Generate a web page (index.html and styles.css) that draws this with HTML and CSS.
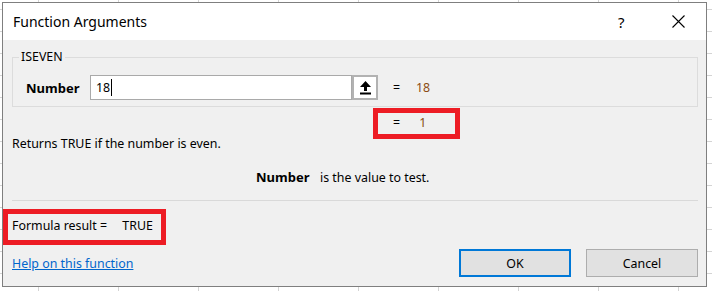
FILE: index.html
```html
<!DOCTYPE html>
<html lang="en">
<head>
  <meta charset="UTF-8" />
  <title>Function Arguments</title>
  <link rel="stylesheet" href="styles.css">
</head>
<body>
  <div class="dialog">
    <div class="titlebar">
      <span class="title">Function Arguments</span>
      <span class="help-btn">?</span>
      <span class="close-btn">
        <svg width="13" height="13" viewBox="0 0 13 13"><path d="M0.5 0.5 L12.5 12.5 M12.5 0.5 L0.5 12.5" stroke="#000" stroke-width="1.1" fill="none"/></svg>
      </span>
    </div>

    <div class="content">
      <fieldset class="args">
        <legend>ISEVEN</legend>
        <div class="arg-row">
          <span class="arg-name">Number</span>
          <div class="arg-input">18<span class="caret"></span></div>
          <span class="ref-btn">
            <svg width="11" height="14" viewBox="0 0 11 14"><path d="M5.5 0 L11 6 H7 V10 H4 V6 H0 Z" fill="#000"/><rect x="0" y="11.5" width="11" height="2" fill="#000"/></svg>
          </span>
          <span class="eq">=</span>
          <span class="val">18</span>
        </div>
      </fieldset>

      <div class="result-row marked mark-result">
        <span class="eq">=</span>
        <span class="val">1</span>
      </div>

      <p class="desc">Returns TRUE if the number is even.</p>
      <p class="arg-desc"><b>Number</b><span>is the value to test.</span></p>

      <div class="sep"></div>

      <div class="formula marked mark-formula">Formula result = <span class="formula-val">TRUE</span></div>

      <div class="footer">
        <a class="help-link" href="#">Help on this function</a>
        <div class="buttons">
          <button class="btn btn-ok">OK</button>
          <button class="btn">Cancel</button>
        </div>
      </div>
    </div>
  </div>
</body>
</html>
```

FILE: styles.css
```css
body {
  margin: 0;
  width: 712px;
  height: 291px;
  overflow: hidden;
  font-family: 'Noto Sans', 'Open Sans', sans-serif;
  font-size: 12.4px;
  color: #000;
  background-color: #fff;
  background-image:
    linear-gradient(to right, #d4d4d4 1px, transparent 1px),
    linear-gradient(to bottom, #d4d4d4 1px, transparent 1px);
  background-size: 80px 22px;
  background-position: 38px 9px;
}
.dialog {
  margin: 2px 0 0 2px;
  width: 703px;
  height: 283px;
  border: 1px solid #7f7f7f;
  background-color: #f0f0f0;
  display: flex;
  flex-direction: column;
}
.titlebar {
  height: 37px;
  background-color: #fff;
  display: flex;
  align-items: center;
  padding-left: 10px;
}
.title {
  font-size: 14px;
  flex: 1;
  padding-bottom: 1px;
}
.help-btn {
  font-size: 15px;
  width: 12px;
  margin-right: 42px;
}
.close-btn {
  display: flex;
  margin-right: 21px;
}
.content {
  flex: 1;
  padding: 0 8px 0 9px;
}
.args {
  margin: 9px 0 0 0;
  padding: 0;
  border: 1px solid #dcdcdc;
}
.args legend {
  margin-left: 6px;
  padding: 0 2px;
  line-height: 16px;
}
.arg-row {
  display: flex;
  align-items: center;
  padding: 10px 0 6px 13px;
}
.arg-name {
  width: 64px;
  font-weight: bold;
  font-size: 13px;
}
.arg-input {
  width: 255px;
  height: 23px;
  border: 1px solid #a9a9a9;
  background-color: #fff;
  padding-left: 5px;
  line-height: 23px;
  display: flex;
  align-items: center;
}
.caret {
  display: inline-block;
  width: 1px;
  height: 17px;
  background-color: #000;
  margin-left: 1px;
}
.ref-btn {
  width: 22px;
  height: 21px;
  border: 2px solid #b2b2b2;
  background-color: #fff;
  display: flex;
  align-items: center;
  justify-content: center;
}
.eq {
  display: inline-block;
  width: 23px;
  margin-left: 15px;
}
.val {
  color: #8a4c12;
}
.marked {
  position: relative;
}
.marked::after {
  content: "";
  position: absolute;
  border: 5px solid #ed1c24;
  box-sizing: border-box;
}
.result-row {
  margin-top: 8px;
  line-height: 16px;
  padding-left: 381px;
}
.result-row .eq {
  margin-left: 0;
}
.mark-result::after {
  left: 361px;
  top: -7px;
  width: 87px;
  height: 31px;
}
.desc {
  margin: 5px 0 0 0;
  line-height: 16px;
}
.arg-desc {
  margin: 17px 0 0 0;
  line-height: 16px;
  padding-left: 244px;
}
.arg-desc b {
  display: inline-block;
  width: 64px;
  font-size: 13px;
}
.sep {
  margin-top: 14px;
  height: 1px;
  background-color: #d9d9d9;
}
.formula {
  margin-top: 17px;
  line-height: 16px;
}
.formula-val {
  margin-left: 12px;
}
.mark-formula::after {
  left: -9px;
  top: -9px;
  width: 163px;
  height: 36px;
}
.footer {
  margin-top: 15px;
  display: flex;
  justify-content: space-between;
  align-items: center;
}
.help-link {
  color: #0066cc;
  text-decoration: underline;
}
.buttons {
  display: flex;
  gap: 15px;
}
.btn {
  width: 112px;
  height: 28px;
  font-family: inherit;
  font-size: 12.4px;
  color: #000;
  background-color: #e1e1e1;
  border: 1px solid #adadad;
  padding: 0;
}
.btn-ok {
  border: 2px solid #0078d7;
}
```
